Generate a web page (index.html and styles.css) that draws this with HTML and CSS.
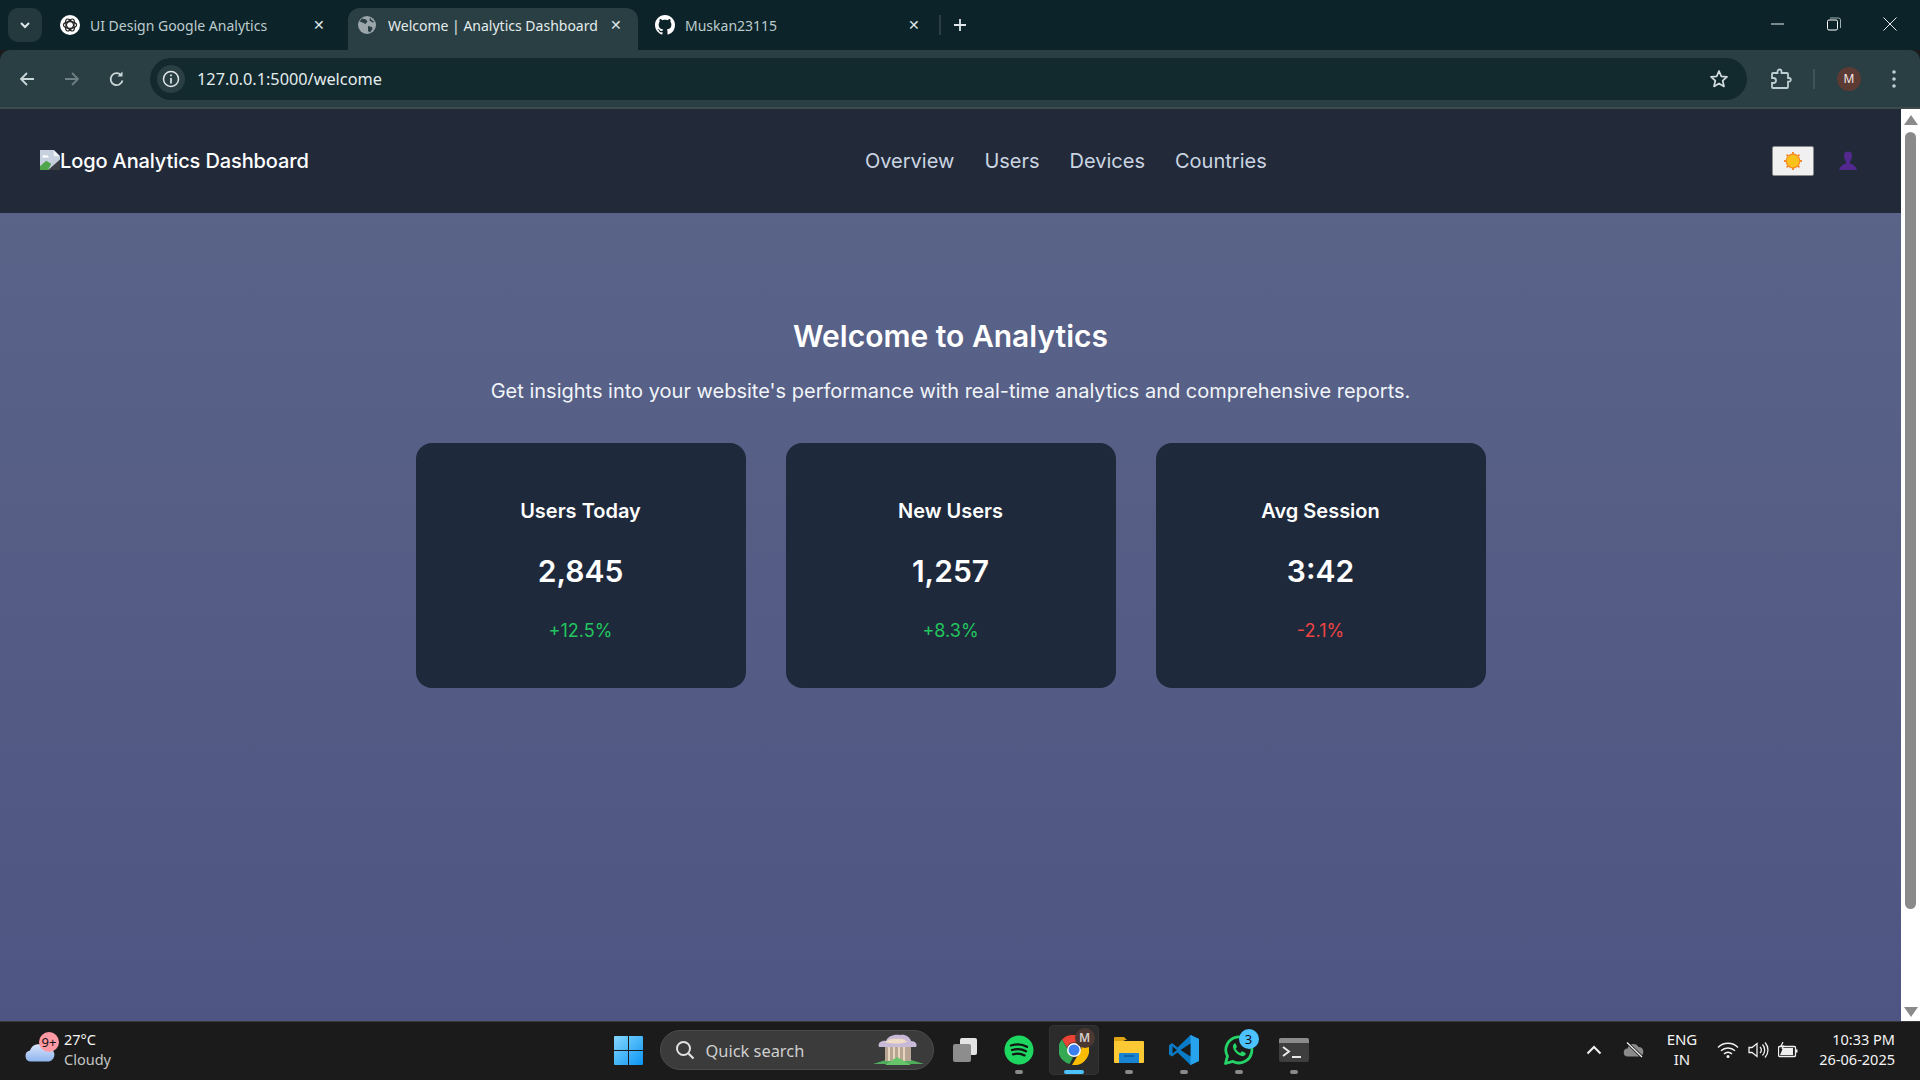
FILE: index.html
```html
<!DOCTYPE html>
<html lang="en">
<head>
    <meta charset="UTF-8">
    <meta name="viewport" content="width=device-width, initial-scale=1.0">
    <title>Welcome | Analytics Dashboard</title>
    <link rel="stylesheet" href="styles.css">
</head>
<body>

<!-- browser tabs -->
<div class="tab-strip">
    <button class="tab-search">
        <svg width="12" height="12" viewBox="0 0 12 12"><path d="M2 4l4 4 4-4" fill="none" stroke="#dfe7e8" stroke-width="2"/></svg>
    </button>
    <div class="tab tab-first">
        <svg class="favicon" width="20" height="20" viewBox="0 0 20 20">
            <circle cx="10" cy="10" r="10" fill="#fff"/>
            <g fill="none" stroke="#222" stroke-width="1.2">
                <ellipse cx="10" cy="10" rx="6.6" ry="3.4"/>
                <ellipse cx="10" cy="10" rx="6.6" ry="3.4" transform="rotate(60 10 10)"/>
                <ellipse cx="10" cy="10" rx="6.6" ry="3.4" transform="rotate(120 10 10)"/>
            </g>
        </svg>
        <span class="tab-title">UI Design Google Analytics</span>
        <span class="tab-close">✕</span>
    </div>
    <div class="tab tab-active">
        <svg class="favicon" width="18" height="18" viewBox="0 0 18 18">
            <circle cx="9" cy="9" r="9" fill="#9aa6aa"/>
            <path d="M4 2.500l4 1 1.500 2-2 2.500-3-1.500-3-1zM10 10l4 1 .5 2-2.500 3.500-2-1.500zM12 1.500l2 3 2.500 1-2 1-3-2z" fill="#2a3f44"/>
        </svg>
        <span class="tab-title">Welcome | Analytics Dashboard</span>
        <span class="tab-close">✕</span>
    </div>
    <div class="tab tab-last">
        <svg class="favicon" width="20" height="20" viewBox="0 0 16 16">
            <path fill="#fff" d="M8 0C3.580 0 0 3.580 0 8c0 3.540 2.290 6.530 5.470 7.590.4.070.55-.17.55-.38 0-.19-.01-.82-.01-1.490-2.010.37-2.530-.49-2.690-.94-.09-.23-.48-.94-.82-1.130-.28-.15-.68-.52-.01-.53.63-.01 1.080.58 1.230.82.720 1.210 1.870.870 2.330.660.070-.520.280-.870.510-1.070-1.780-.200-3.640-.890-3.640-3.950 0-.870.310-1.590.820-2.150-.080-.200-.360-1.020.080-2.120 0 0 .670-.210 2.200.820.640-.180 1.320-.270 2-.270s1.360.090 2 .270c1.530-1.040 2.200-.820 2.200-.820.440 1.100.160 1.920.080 2.120.510.560.820 1.270.820 2.150 0 3.070-1.870 3.750-3.650 3.950.290.250.540.730.540 1.480 0 1.070-.010 1.930-.010 2.200 0 .210.150.460.550.380A8.010 8.010 0 0 0 16 8c0-4.420-3.580-8-8-8z"/>
        </svg>
        <span class="tab-title">Muskan23115</span>
        <span class="tab-close">✕</span>
    </div>
    <span class="tab-sep"></span>
    <svg class="new-tab" width="14" height="14" viewBox="0 0 14 14"><path d="M7 1v12M1 7h12" stroke="#dfe7e8" stroke-width="1.800"/></svg>
    <div class="window-btns">
        <svg width="14" height="14" viewBox="0 0 14 14"><path d="M0 7h13" stroke="#e8eeee" stroke-width="1"/></svg>
        <svg width="14" height="14" viewBox="0 0 14 14"><rect x=".5" y="3" width="10" height="10" rx="1.500" fill="none" stroke="#fff"/><path d="M3 1h8.500a2 2 0 0 1 2 2v8" fill="none" stroke="#9fb0b2"/></svg>
        <svg width="14" height="14" viewBox="0 0 14 14"><path d="M.5.5l13 13M13.500.5l-13 13" stroke="#e8eeee"/></svg>
    </div>
</div>

<!-- address bar -->
<div class="toolbar">
    <div class="nav-btns">
        <svg width="18" height="18" viewBox="0 0 18 18"><path d="M16 9H3M9 3L3 9l6 6" fill="none" stroke="#c9d6d8" stroke-width="1.800"/></svg>
        <svg width="18" height="18" viewBox="0 0 18 18"><path d="M2 9h13M9 3l6 6-6 6" fill="none" stroke="#6d8084" stroke-width="1.800"/></svg>
        <svg width="18" height="18" viewBox="0 0 18 18"><path d="M14.500 10.500A6 6 0 1 1 13 5" fill="none" stroke="#c9d6d8" stroke-width="1.800"/><path d="M14.500 1.500v5h-5z" fill="#c9d6d8"/></svg>
    </div>
    <div class="omnibox">
        <span class="info-chip">
            <svg width="18" height="18" viewBox="0 0 18 18"><circle cx="9" cy="9" r="7.500" fill="none" stroke="#dfe7e8" stroke-width="1.500"/><path d="M9 8v5.500M9 4.500v1.800" stroke="#dfe7e8" stroke-width="1.700"/></svg>
        </span>
        <span class="url">127.0.0.1:5000/welcome</span>
        <svg class="star" width="20" height="20" viewBox="0 0 20 20"><path d="M10 2l2.300 5.400 5.700.5-4.300 3.800 1.300 5.700-5-3-5 3 1.300-5.700L2 7.900l5.700-.5z" fill="none" stroke="#d3dddf" stroke-width="1.700" stroke-linejoin="round"/></svg>
    </div>
    <svg class="puzzle" width="22" height="22" viewBox="0 0 22 22"><path d="M3 5h4.500V3.500a2 2 0 0 1 4 0V5H17a1 1 0 0 1 1 1v4h1a1.800 1.800 0 0 1 0 3.600h-1V19a1 1 0 0 1-1 1H3a1 1 0 0 1-1-1v-4h1.500a2.500 2.500 0 0 0 0-5H2V6a1 1 0 0 1 1-1z" fill="none" stroke="#bcd0d3" stroke-width="1.800"/></svg>
    <span class="toolbar-sep"></span>
    <span class="avatar">M</span>
    <svg class="kebab" width="4" height="18" viewBox="0 0 4 18"><circle cx="2" cy="2" r="1.800" fill="#bcd0d3"/><circle cx="2" cy="9" r="1.800" fill="#bcd0d3"/><circle cx="2" cy="16" r="1.800" fill="#bcd0d3"/></svg>
</div>

<div class="viewport">
    <div class="page">
        <header class="site-header">
            <div class="brand">
                <svg class="broken-img" width="20" height="20" viewBox="0 0 16 16">
                    <path d="M0 0h11l5 5v4l-8 7H0z" fill="#c6d0de"/>
                    <path d="M11 0l5 5h-5z" fill="#eef1f5"/>
                    <path d="M2 6a1.500 1.500 0 0 1 2.500-1.500A1.700 1.700 0 0 1 7 6z" fill="#fff"/>
                    <path d="M0 16v-3l5-4.500 4 2.500-2.500 5z" fill="#4fa54a"/>
                    <path d="M6.500 16L16 7.500V16z" fill="#3c3f44"/>
                </svg>
                <span>Logo Analytics Dashboard</span>
            </div>
            <nav class="site-nav">
                <a href="#">Overview</a>
                <a href="#">Users</a>
                <a href="#">Devices</a>
                <a href="#">Countries</a>
            </nav>
            <div class="header-tools">
                <button class="theme-btn">
                    <svg width="18" height="18" viewBox="0 0 18 18">
                        <g stroke="#f58a2e" stroke-width="2">
                            <path d="M9 0v18M0 9h18M2.600 2.600l12.800 12.800M15.400 2.600L2.600 15.400"/>
                        </g>
                        <circle cx="9" cy="9" r="7.400" fill="#f58a2e"/>
                        <circle cx="9" cy="9" r="6.200" fill="#fcc21b"/>
                    </svg>
                </button>
                <svg class="user-icon" width="20" height="20" viewBox="0 0 20 20"><path d="M6 4.500C6 1.500 8 .5 10 .5s4 1 4 4c0 3-1 5-2 6v2c3 .5 6 3 7 6.500H1c1-3.500 4-6 7-6.500v-2c-1-1-2-3-2-6z" fill="#54298f"/></svg>
            </div>
        </header>

        <main class="welcome">
            <h1>Welcome to Analytics</h1>
            <p class="lead">Get insights into your website's performance with real-time analytics and comprehensive reports.</p>
            <div class="stats">
                <div class="stat-card">
                    <h3>Users Today</h3>
                    <div class="stat-value">2,845</div>
                    <div class="stat-change up">+12.5%</div>
                </div>
                <div class="stat-card">
                    <h3>New Users</h3>
                    <div class="stat-value">1,257</div>
                    <div class="stat-change up">+8.3%</div>
                </div>
                <div class="stat-card">
                    <h3>Avg Session</h3>
                    <div class="stat-value">3:42</div>
                    <div class="stat-change down">-2.1%</div>
                </div>
            </div>
        </main>
    </div>
    <div class="scrollbar">
        <svg width="14" height="10" viewBox="0 0 14 10"><path d="M7 0l7 10H0z" fill="#8a8a8a"/></svg>
        <span class="scroll-thumb"></span>
        <svg width="14" height="10" viewBox="0 0 14 10"><path d="M7 10L14 0H0z" fill="#8a8a8a"/></svg>
    </div>
</div>

<!-- windows taskbar -->
<footer class="taskbar">
    <div class="weather">
        <div class="weather-icon">
            <svg width="30" height="20" viewBox="0 0 30 20"><defs><linearGradient id="cloud" x1="0" y1="0" x2="0" y2="1"><stop offset="0" stop-color="#d9e6fb"/><stop offset="1" stop-color="#8fb4ee"/></linearGradient></defs><path d="M6 19.500a5.500 5.500 0 0 1-1-10.900A9 9 0 0 1 21 6a6.800 6.800 0 0 1 3 13.500z" fill="url(#cloud)"/></svg>
            <span class="weather-badge">9+</span>
        </div>
        <div class="weather-text">
            <div>27°C</div>
            <div class="weather-sub">Cloudy</div>
        </div>
    </div>

    <div class="task-icons">
        <svg class="start" width="29" height="29" viewBox="0 0 29 29">
            <defs><linearGradient id="win" x1="0" y1="0" x2="1" y2="1"><stop offset="0" stop-color="#86d8ff"/><stop offset="1" stop-color="#0a94f2"/></linearGradient></defs>
            <path d="M1 0h13v14H0V1a1 1 0 0 1 1-1zM15 0h13a1 1 0 0 1 1 1v13H15zM0 15h14v14H1a1 1 0 0 1-1-1zM15 15h14v13a1 1 0 0 1-1 1H15z" fill="url(#win)"/>
        </svg>
        <div class="search-pill">
            <svg width="20" height="20" viewBox="0 0 20 20"><circle cx="8.500" cy="8.500" r="6.500" fill="none" stroke="#e2e2e2" stroke-width="2"/><path d="M13.500 13.500l5 5" stroke="#e2e2e2" stroke-width="2.200"/></svg>
            <span>Quick search</span>
            <svg class="search-art" width="54" height="32" viewBox="0 0 54 32">
                <path d="M2 30l16-5 10-3 12 4 13 4z" fill="#4fae5c"/>
                <rect x="14" y="11" width="26" height="16" fill="#b7a493"/>
                <path d="M18 12v15M23 12v15M28 12v15M33 12v15" stroke="#e6d6c0" stroke-width="2"/>
                <path d="M8 13c-2-5 4-7 7-6 2-5 8-7 14-6 5-1 10 2 11 6 4 0 7 3 5 6z" fill="#c8bad6"/>
                <path d="M14 8c4-3 8-4 12-3 4-1 8 0 10 3-6 2-16 2-22 0z" fill="#efdcc7"/>
                <path d="M14 31l12-8 14 8z" fill="#68c46b"/>
            </svg>
        </div>
        <svg class="task-views" width="30" height="26" viewBox="0 0 30 26"><rect x="10" y="1" width="17" height="17" rx="2" fill="#e4e4e4"/><rect x="3" y="7" width="18" height="18" rx="2" fill="#8d8d8d"/></svg>
        <div class="app">
            <svg width="30" height="30" viewBox="0 0 30 30"><circle cx="15" cy="15" r="14.500" fill="#1ed760"/><path d="M7 10.500c6-1.800 11.500-1.300 16 1.300M8 15c5-1.400 10-1 14 1.300M9 19.300c4.300-1.100 8.200-.8 11.600 1.100" fill="none" stroke="#141414" stroke-width="2.300" stroke-linecap="round"/></svg>
            <span class="app-dot"></span>
        </div>
        <div class="app app-active">
            <svg width="30" height="30" viewBox="0 0 30 30">
                <path d="M15 0a15 15 0 0 1 13 7.500H15a7.500 7.500 0 0 0-7 5L3 4.500A15 15 0 0 1 15 0z" fill="#ea4335"/>
                <path d="M3 4.500l6.500 11.300a6.500 6.500 0 0 0 4.500 6.700L10.500 29A15 15 0 0 1 3 4.500z" fill="#34a853"/>
                <path d="M28 7.500A15 15 0 0 1 13 30l6.500-11A7.500 7.500 0 0 0 20 7.500z" fill="#fbbc04"/>
                <circle cx="15" cy="15" r="7" fill="#fff"/>
                <circle cx="15" cy="15" r="5.500" fill="#3b7ff0"/>
            </svg>
            <span class="chrome-badge">M</span>
            <span class="app-bar"></span>
        </div>
        <div class="app">
            <svg width="30" height="28" viewBox="0 0 30 28">
                <path d="M0 2a1 1 0 0 1 1-1h9l3 3h-2L8 6H0z" fill="#e0a412"/>
                <path d="M0 5h29a1 1 0 0 1 1 1v20a1 1 0 0 1-1 1H1a1 1 0 0 1-1-1z" fill="#fcc934"/>
                <path d="M5 18a1 1 0 0 1 1-1h18a1 1 0 0 1 1 1v9H5z" fill="#1a84d4"/>
                <path d="M10 20h10" stroke="#0c5a99" stroke-width="1.500"/>
            </svg>
            <span class="app-dot"></span>
        </div>
        <div class="app">
            <svg width="30" height="30" viewBox="0 0 30 30">
                <path d="M21.500 0L30 4v22l-8.500 4-13-12.500-5.500 4L0 19.500v-9L3 8l5.500 4.500z" fill="#0a7cc7"/>
                <path d="M21.500 0L30 4v22l-8.500 4z" fill="#27a3ee"/>
                <path d="M21.500 8.500L11.500 15l10 6.500z" fill="#1b1b1b"/>
                <path d="M3.500 11.500L8 15l-4.500 3.500z" fill="#1b1b1b"/>
            </svg>
            <span class="app-dot"></span>
        </div>
        <div class="app">
            <svg width="30" height="30" viewBox="0 0 30 30">
                <path d="M1.500 28.500l2-7.300A13 13 0 1 1 8.800 26.400z" fill="none" stroke="#25d366" stroke-width="2.800" stroke-linejoin="round"/>
                <path d="M10.500 8.500c-1.700 1-2 3-1 5.500 1.500 3.500 4.500 6 8 7 2 .5 3.500-.3 4.200-2 .2-.6 0-1-.5-1.300l-2.700-1.300c-.5-.2-.9 0-1.200.4l-1 1.200c-2-.8-3.700-2.400-4.600-4.400l.9-1c.4-.4.400-.8.200-1.300l-1.100-2.500c-.3-.7-.6-.7-1.200-.3z" fill="#25d366"/>
            </svg>
            <span class="wa-badge">3</span>
            <span class="app-dot"></span>
        </div>
        <div class="app">
            <svg width="30" height="24" viewBox="0 0 30 24">
                <rect width="30" height="24" rx="2" fill="#3e3e3e"/>
                <path d="M0 2a2 2 0 0 1 2-2h26a2 2 0 0 1 2 2v3H0z" fill="#8c8c8c"/>
                <path d="M4 9l6 4.500L4 18" fill="none" stroke="#e8e8e8" stroke-width="2"/>
                <path d="M13 19h9" stroke="#e8e8e8" stroke-width="2"/>
            </svg>
            <span class="app-dot"></span>
        </div>
    </div>

    <div class="tray">
        <svg class="tray-chevron" width="16" height="10" viewBox="0 0 16 10"><path d="M1.500 8.500L8 2l6.500 6.500" fill="none" stroke="#f0f0f0" stroke-width="2"/></svg>
        <svg class="tray-cloud" width="22" height="16" viewBox="0 0 22 16"><path d="M5 14.500a4 4 0 0 1-.5-8A6 6 0 0 1 15.500 5a4.800 4.800 0 0 1 1 9.500z" fill="#8a8a8a"/><path d="M4 .5L19 15" stroke="#1b1b1b" stroke-width="3"/><path d="M4 .5L19 15" stroke="#f0f0f0" stroke-width="1.300"/></svg>
        <div class="lang">ENG<br>IN</div>
        <svg width="22" height="16" viewBox="0 0 22 16"><path d="M1 5.500a14 14 0 0 1 20 0M4 8.800a10 10 0 0 1 14 0M7 12a5.500 5.500 0 0 1 8 0" fill="none" stroke="#f0f0f0" stroke-width="1.400"/><circle cx="11" cy="14.500" r="1.500" fill="#f0f0f0"/></svg>
        <svg width="21" height="18" viewBox="0 0 21 18"><path d="M1 6.500h3L9 2.500v13l-5-4H1z" fill="none" stroke="#f0f0f0" stroke-width="1.300"/><path d="M12 6a4 4 0 0 1 0 6M14.500 3.500a8 8 0 0 1 0 11M17 1.500a11 11 0 0 1 0 15" fill="none" stroke="#f0f0f0" stroke-width="1.300"/></svg>
        <svg width="20" height="16" viewBox="0 0 20 16"><path d="M1.500 4.500h15a1 1 0 0 1 1 1v8a1 1 0 0 1-1 1h-15a1 1 0 0 1-1-1v-8a1 1 0 0 1 1-1z" fill="none" stroke="#f0f0f0" stroke-width="1.300"/><path d="M18 7.500h1.500v3H18z" fill="#f0f0f0"/><path d="M2 13l3-7h10v7z" fill="#f0f0f0"/><path d="M5 0L3 4h2.500L4 7" fill="none" stroke="#f0f0f0" stroke-width="1.200"/></svg>
        <div class="clock">10:33 PM<br>26-06-2025</div>
    </div>
</footer>

</body>
</html>
```

FILE: styles.css
```css
* {
    box-sizing: border-box;
}
html, body {
    height: 100%;
}
body {
    margin: 0;
    display: flex;
    flex-direction: column;
    overflow: hidden;
    font-family: Inter, sans-serif;
    background: #1b1b1b;
}
button {
    font-family: inherit;
}

/* tab strip */
.tab-strip {
    height: 50px;
    flex: none;
    display: flex;
    align-items: flex-end;
    padding-left: 8px;
    background: #0c2429;
    font-family: "Noto Sans", sans-serif;
    font-size: 14px;
}
.tab-search {
    width: 34px;
    height: 34px;
    margin-bottom: 8px;
    display: flex;
    align-items: center;
    justify-content: center;
    padding: 0;
    background: #24393e;
    border: none;
    border-radius: 10px;
}
.tab {
    height: 42px;
    display: flex;
    align-items: center;
    padding-bottom: 8px;
    border-radius: 12px 12px 0 0;
    color: #bccbcd;
}
.tab-first {
    width: 288px;
    margin-left: 18px;
}
.tab-active {
    width: 290px;
    padding-left: 10px;
    background: #2a3f44;
    color: #e4ecec;
}
.tab-last {
    width: 301px;
    padding-left: 17px;
}
.tab-first .favicon,
.tab-last .favicon {
    margin-right: 10px;
}
.tab-active .favicon {
    margin-right: 12px;
}
.tab-title {
    flex: 1;
    white-space: nowrap;
    overflow: hidden;
}
.tab-close {
    width: 14px;
    font-size: 14px;
    font-family: "DejaVu Sans", sans-serif;
    color: #dfe7e8;
    margin-right: 14px;
}
.tab-first .tab-close {
    margin-right: 21px;
}
.tab-last .tab-close {
    margin-right: 17px;
}
.tab-sep {
    width: 2px;
    height: 20px;
    margin: 0 0 15px 0;
    background: #2a3f44;
}
.new-tab {
    margin: 0 0 18px 12px;
}
.window-btns {
    margin-left: auto;
    margin-right: 23px;
    margin-bottom: 19px;
    display: flex;
    gap: 42px;
}

/* address bar */
.toolbar {
    height: 57px;
    flex: none;
    display: flex;
    align-items: center;
    padding: 0 0 0 18px;
    background: #2a3f44;
    border-radius: 10px 10px 0 0;
}
.nav-btns {
    display: flex;
    gap: 27px;
}
.omnibox {
    width: 1597px;
    height: 42px;
    margin-left: 24px;
    display: flex;
    align-items: center;
    padding: 0 18px 0 7px;
    background: #12292e;
    border-radius: 21px;
}
.info-chip {
    width: 28px;
    height: 28px;
    display: flex;
    align-items: center;
    justify-content: center;
    background: #2a3f44;
    border-radius: 50%;
}
.url {
    margin-left: 12px;
    font-family: "Noto Sans", sans-serif;
    font-size: 16.300px;
    color: #e4ecec;
}
.star {
    margin-left: auto;
}
.puzzle {
    margin-left: 23px;
}
.toolbar-sep {
    width: 2px;
    height: 20px;
    margin-left: 21px;
    background: #3f5458;
}
.avatar {
    width: 24px;
    height: 24px;
    margin-left: 22px;
    display: flex;
    align-items: center;
    justify-content: center;
    background: #5d3b35;
    border-radius: 50%;
    color: #f2e8e6;
    font-family: "Noto Sans", sans-serif;
    font-size: 12px;
}
.kebab {
    margin-left: 31px;
}

/* page area */
.viewport {
    flex: 1;
    display: flex;
    min-height: 0;
    border-top: 2px solid #3f4a4c;
}
.page {
    flex: 1;
    display: flex;
    flex-direction: column;
    min-width: 0;
    background: linear-gradient(180deg, #5b6589, #4f5582);
}
.site-header {
    height: 104px;
    flex: none;
    display: flex;
    align-items: center;
    justify-content: space-between;
    padding: 0 40px;
    background: #222a3a;
}
.brand {
    display: flex;
    align-items: center;
    margin-right: 51px;
    font-size: 20px;
    font-weight: 500;
    letter-spacing: -0.12px;
    color: #fff;
}
.broken-img {
    margin-top: -3px;
}
.site-nav {
    display: flex;
    gap: 30px;
}
.site-nav a {
    font-size: 20px;
    color: #cbd5e1;
    text-decoration: none;
}
.header-tools {
    display: flex;
    align-items: center;
    gap: 24px;
}
.theme-btn {
    width: 42px;
    height: 30px;
    display: flex;
    align-items: center;
    justify-content: center;
    padding: 0;
    background: #f0f0f0;
    border: 1px solid #8a8a8a;
    border-radius: 2px;
}
.user-icon {
    margin-right: 3px;
}

/* welcome section */
.welcome {
    display: flex;
    flex-direction: column;
    align-items: center;
    padding-top: 105px;
    color: #fff;
}
.welcome h1 {
    margin: 0;
    font-size: 30px;
    line-height: 36px;
    font-weight: 600;
}
.lead {
    margin: 23px 0 0;
    font-size: 20px;
    line-height: 28px;
    color: #f1f5f9;
}
.stats {
    display: flex;
    gap: 40px;
    margin-top: 38px;
}
.stat-card {
    width: 330px;
    height: 245px;
    padding-top: 54px;
    text-align: center;
    background: #1e293b;
    border-radius: 16px;
}
.stat-card h3 {
    margin: 0;
    font-size: 20px;
    line-height: 28px;
    font-weight: 600;
}
.stat-value {
    margin-top: 28px;
    font-size: 30px;
    line-height: 36px;
    font-weight: 600;
}
.stat-change {
    margin-top: 30px;
    font-size: 18px;
    line-height: 24px;
}
.up {
    color: #22c55e;
}
.down {
    color: #ef4444;
}

/* scrollbar */
.scrollbar {
    width: 19px;
    flex: none;
    display: flex;
    flex-direction: column;
    align-items: center;
    padding: 6px 0 4px;
    background: #fff;
}
.scroll-thumb {
    width: 11px;
    height: 777px;
    margin: 7px 0 auto;
    background: #8a8a8a;
    border-radius: 6px;
}

/* taskbar */
.taskbar {
    height: 59px;
    flex: none;
    display: grid;
    grid-template-columns: 1fr auto 1fr;
    align-items: center;
    padding: 0 25px 2px;
    background: #1b1b1b;
    border-top: 1px solid #3a3a3a;
    font-family: "Noto Sans", sans-serif;
    color: #f4f4f4;
}
.weather {
    display: flex;
    align-items: center;
}
.weather-icon {
    position: relative;
    width: 30px;
    height: 20px;
    margin-top: 4px;
}
.weather-badge {
    position: absolute;
    top: -10px;
    left: 14px;
    width: 20px;
    height: 20px;
    background: #ff99a4;
    border-radius: 50%;
    color: #111;
    font-size: 13px;
    line-height: 20px;
    text-align: center;
}
.weather-text {
    margin: -2px 0 0 9px;
    font-size: 14.500px;
    line-height: 20px;
}
.weather-sub {
    color: #c4c4c4;
}
.task-icons {
    display: flex;
    align-items: center;
    margin-left: 12px;
}
.search-pill {
    width: 274px;
    height: 40px;
    margin-left: 17px;
    display: flex;
    align-items: center;
    padding: 0 8px 0 14px;
    background: #3b3b3b;
    border: 1px solid #4c4c4c;
    border-radius: 20px;
    color: #cfcfcf;
    font-size: 16.400px;
}
.search-pill span {
    margin-left: 11px;
}
.search-art {
    margin-left: auto;
}
.task-views {
    margin: 0 9px 0 16px;
}
.app {
    position: relative;
    width: 50px;
    height: 50px;
    margin-left: 5px;
    display: flex;
    align-items: center;
    justify-content: center;
    border-radius: 5px;
}
.app-active {
    background: #2b2b2b;
    box-shadow: inset 0 0 0 1px #333;
}
.app-dot {
    position: absolute;
    bottom: 1px;
    left: 21px;
    width: 8px;
    height: 4px;
    background: #8a8a8a;
    border-radius: 2px;
}
.app-bar {
    position: absolute;
    bottom: 1px;
    left: 15px;
    width: 20px;
    height: 4px;
    background: #4cc2ff;
    border-radius: 2px;
}
.chrome-badge {
    position: absolute;
    top: 3px;
    right: 4px;
    width: 20px;
    height: 20px;
    background: #4c3832;
    border-radius: 50%;
    color: #d8cfcc;
    font-size: 12px;
    font-weight: 600;
    line-height: 20px;
    text-align: center;
}
.wa-badge {
    position: absolute;
    top: 4px;
    right: 5px;
    width: 20px;
    height: 20px;
    background: #4cc2ff;
    border-radius: 50%;
    color: #111;
    font-size: 13px;
    line-height: 20px;
    text-align: center;
}
.tray {
    display: flex;
    align-items: center;
    justify-content: flex-end;
    gap: 9px;
}
.tray-chevron {
    margin-right: 12px;
}
.tray-cloud {
    margin-right: 13px;
}
.lang,
.clock {
    margin-top: -2px;
    font-size: 14.500px;
    line-height: 20px;
}
.lang {
    margin-right: 11px;
    font-size: 15px;
    text-align: center;
}
.clock {
    margin-left: 12px;
    text-align: right;
}
```
